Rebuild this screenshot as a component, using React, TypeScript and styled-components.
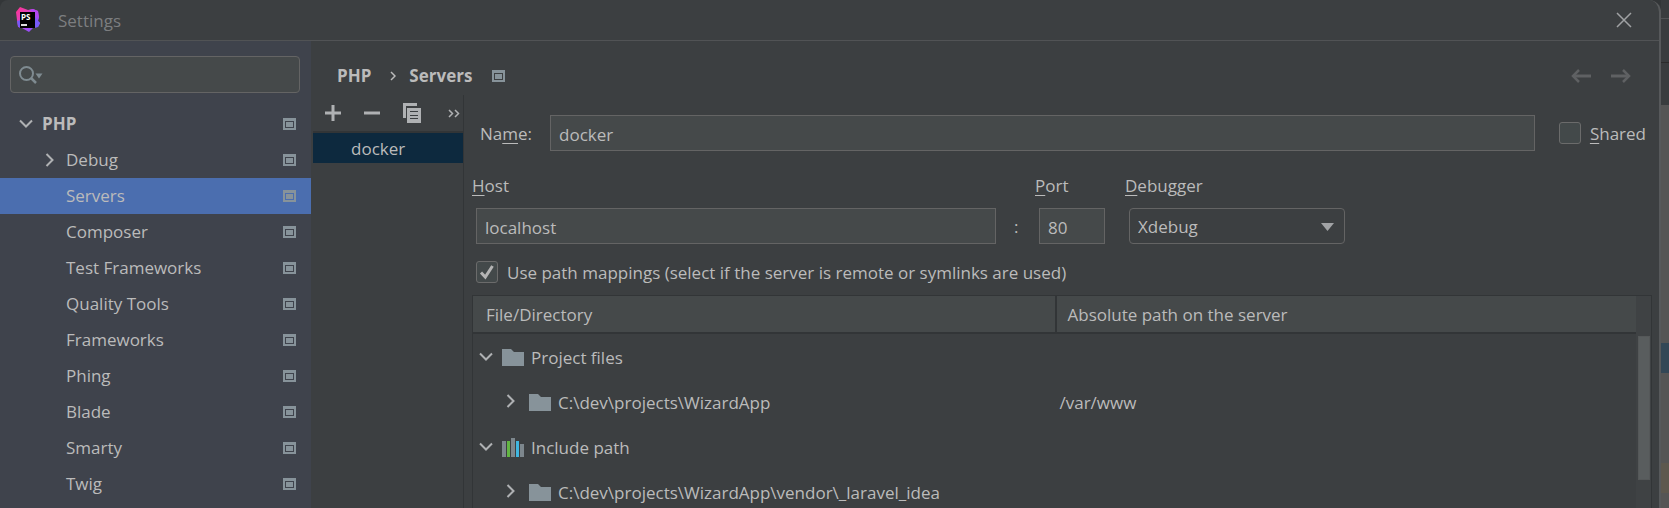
import React, { useState } from "react";
import styled, { createGlobalStyle, css } from "styled-components";

const c = {
  panel: "#3c3f41",
  side: "#3f434c",
  field: "#45494a",
  line: "#646464",
  dark: "#323537",
  text: "#bbbbbb",
  icon: "#87939a",
  glyph: "#afb1b3",
};

const Global = createGlobalStyle`
  *, *::before, *::after { box-sizing: border-box; }
  html, body, #root { height: 100%; }
  body { margin: 0; overflow: hidden; background: ${c.panel}; }
  body, button, input, select, table {
    font-family: "Open Sans", "Noto Sans", sans-serif;
    font-size: 17px;
    line-height: 24px;
    color: ${c.text};
  }
  u { text-underline-offset: 3px; text-decoration-thickness: 1px; }
`;

const Screen = styled.div`
  display: flex;
  height: 100%;
  overflow: hidden;
  background: #333638;
`;

const Dialog = styled.div`
  flex: 1;
  min-width: 0;
  display: flex;
  flex-direction: column;
  border-right: 2px solid #57595b;
  border-radius: 8px 12px 0 0;
  background: ${c.panel};
`;

const Backdrop = styled.div`
  width: 8px;
  display: flex;
  flex-direction: column;
`;

const Strip = styled.div<{ $h?: number; $color: string; $line?: string }>`
  ${(p) => (p.$h ? css`height: ${p.$h}px;` : css`flex: 1;`)}
  background: ${(p) => p.$color};
  border-bottom: ${(p) => (p.$line ? `1px solid ${p.$line}` : "none")};
`;

const TitleBar = styled.header`
  display: flex;
  align-items: center;
  flex: none;
  height: 41px;
  padding: 0 22px 0 15px;
  border-bottom: 1px solid #515355;
`;

const Title = styled.h1`
  flex: 1;
  margin: 0 0 0 17px;
  padding-top: 2px;
  font-size: 17px;
  font-weight: 400;
  color: #7c7e80;
`;

const IconButton = styled.button`
  display: inline-flex;
  align-items: center;
  justify-content: center;
  padding: 0;
  border: 0;
  background: none;
  color: ${c.glyph};
`;

const Body = styled.div`
  flex: 1;
  min-height: 0;
  display: flex;
`;

const Sidebar = styled.nav`
  flex: none;
  width: 311px;
  padding-top: 15px;
  overflow: hidden;
  background: ${c.side};
`;

const SearchBox = styled.label`
  display: flex;
  align-items: center;
  height: 37px;
  margin: 0 11px 13px 10px;
  padding-left: 8px;
  border: 1px solid ${c.line};
  border-radius: 4px;
  background: ${c.field};
`;

const SearchInput = styled.input`
  flex: 1;
  min-width: 0;
  border: 0;
  outline: 0;
  background: none;
`;

const Tree = styled.ul`
  margin: 0;
  padding: 0;
  list-style: none;
`;

const TreeRow = styled.li<{ $root?: boolean; $active?: boolean }>`
  display: flex;
  align-items: center;
  height: 36px;
  padding: 0 15px 1px ${(p) => (p.$root ? 16 : 40)}px;
  font-weight: ${(p) => (p.$root ? 700 : 400)};
  background: ${(p) => (p.$active ? "#4b6eaf" : "transparent")};
`;

const Toggle = styled.span`
  flex: none;
  display: flex;
  align-items: center;
  justify-content: center;
  width: 19px;
  margin-right: 7px;
`;

const TreeLabel = styled.a`
  flex: 1;
  color: inherit;
  text-decoration: none;
`;

const Main = styled.main`
  flex: 1;
  min-width: 0;
  display: flex;
  flex-direction: column;
  padding-left: 2px;
`;

const Crumbs = styled.div`
  flex: none;
  display: flex;
  align-items: center;
  height: 54px;
  padding: 16px 28px 0 24px;
  font-weight: 700;
`;

const CrumbSep = styled.span`
  display: flex;
  margin: 0 13px 0 19px;
`;

const CrumbName = styled.span`
  flex: 1;
  display: flex;
  align-items: center;
  gap: 20px;
`;

const NavButtons = styled.div`
  display: flex;
  gap: 20px;
`;

const Columns = styled.div`
  flex: 1;
  min-height: 0;
  display: flex;
`;

const ServerList = styled.section`
  flex: none;
  width: 151px;
  border-right: 1px solid ${c.dark};
`;

const Toolbar = styled.div`
  display: flex;
  align-items: center;
  height: 38px;
  gap: 23px;
  padding: 0 3px 0 12px;
  border-bottom: 2px solid ${c.dark};

  button:last-child {
    margin-left: auto;
  }
`;

const ServerItem = styled.div`
  height: 30px;
  padding: 4px 0 0 38px;
  background: #0d293e;
`;

const Form = styled.form`
  flex: 1;
  min-width: 0;
  display: flex;
  flex-direction: column;
  padding: 20px 7px 0 8px;
`;

const NameRow = styled.div`
  flex: none;
  display: flex;
  align-items: center;
  padding: 0 6px 0 8px;
`;

const NameLabel = styled.label`
  flex: none;
  width: 70px;
  padding-top: 2px;
`;

const TextField = styled.input`
  width: 100%;
  min-width: 0;
  height: 36px;
  padding: 2px 8px 0;
  border: 1px solid ${c.line};
  border-radius: 0;
  outline: 0;
  background: ${c.field};
`;

const CheckLabel = styled.label`
  flex: none;
  display: flex;
  align-items: center;
  gap: 9px;
`;

const CheckText = styled.span`
  padding-top: 2px;
`;

const SharedSlot = styled.div`
  margin-left: 24px;
`;

const Check = styled.input`
  appearance: none;
  flex: none;
  width: 22px;
  height: 22px;
  margin: 0;
  border: 1px solid #6b6b6b;
  border-radius: 3px;
  background: #43494a;
  &:checked {
    background: #43494a
      url("data:image/svg+xml,%3Csvg xmlns='http://www.w3.org/2000/svg' viewBox='0 0 20 20'%3E%3Cpath d='M4 10.5 8.3 15 15.5 4' fill='none' stroke='%23b4b4b4' stroke-width='3'/%3E%3C/svg%3E")
      center / 20px 20px no-repeat;
  }
`;

const HostGrid = styled.div`
  flex: none;
  display: grid;
  grid-template-columns: minmax(0, 563fr) 90px minmax(220px, 527fr);
  margin-top: 23px;
`;

const FieldLabel = styled.label`
  height: 34px;
`;

const HostCell = styled.div`
  display: flex;
  align-items: center;
  padding-left: 4px;
`;

const Colon = styled.span`
  flex: none;
  width: 39px;
  padding: 2px 0 0 18px;
`;

const PortCell = styled.div`
  padding: 0 20px 0 4px;
`;

const SelectWrap = styled.div`
  position: relative;
  width: 216px;
  margin-left: 4px;
`;

const Select = styled.select`
  appearance: none;
  width: 100%;
  height: 36px;
  padding: 2px 36px 0 8px;
  border: 1px solid ${c.line};
  border-radius: 4px;
  outline: 0;
  background: ${c.panel};
`;

const SelectArrow = styled.svg`
  position: absolute;
  top: 15px;
  right: 11px;
  pointer-events: none;
`;

const MappingRow = styled.div`
  flex: none;
  display: flex;
  align-items: center;
  height: 51px;
  padding: 4px 0 0 4px;
`;

const TableBox = styled.div`
  flex: 1;
  min-height: 0;
  display: flex;
  border: 1px solid ${c.dark};
  border-bottom: 0;
  overflow: hidden;
`;

const Table = styled.table`
  flex: 1;
  align-self: flex-start;
  table-layout: fixed;
  border-collapse: separate;
  border-spacing: 0;
`;

const Th = styled.th<{ $first?: boolean }>`
  width: ${(p) => (p.$first ? "50%" : "auto")};
  height: 38px;
  padding: 2px 0 0 ${(p) => (p.$first ? 13 : 11)}px;
  font-weight: 400;
  text-align: left;
  background: ${c.field};
  border-bottom: 2px solid ${c.dark};
  border-left: ${(p) => (p.$first ? "0" : `2px solid ${c.dark}`)};
`;

const Td = styled.td`
  height: 45px;
  padding: 2px 0 0 5px;
`;

const FileCell = styled.div<{ $depth: number }>`
  display: flex;
  align-items: center;
  padding-left: ${(p) => p.$depth * 27}px;
  white-space: nowrap;
`;

const FileIcon = styled.span`
  display: flex;
  margin-right: 7px;
`;

const FileToggle = styled.span`
  flex: none;
  display: flex;
  width: 16px;
  margin: 0 7px 3px 1px;
`;

const ScrollTrack = styled.div`
  flex: none;
  width: 15px;
  padding: 40px 1px 0 2px;
  background: #3f4244;
`;

const ScrollThumb = styled.div`
  height: 144px;
  border: 1px solid #555859;
  background: #595d5e;
`;

const ScopeIcon = () => (
  <svg width="13" height="12" viewBox="0 0 13 12" aria-hidden="true">
    <path fill={c.icon} fillRule="evenodd" d="M0 0h13v12H0zM2 3v7h9V3z" />
    <rect x="3" y="4" width="7" height="5" fill={c.icon} />
  </svg>
);

const Chevron = ({ open }: { open?: boolean }) =>
  open ? (
    <svg width="14" height="9" viewBox="0 0 14 9" fill="none" stroke={c.glyph} strokeWidth="2" aria-hidden="true">
      <path d="M1 1.5l6 6 6-6" />
    </svg>
  ) : (
    <svg width="9" height="14" viewBox="0 0 9 14" fill="none" stroke={c.glyph} strokeWidth="2" aria-hidden="true">
      <path d="M1.5 1l6 6-6 6" />
    </svg>
  );

const Folder = () => (
  <svg width="22" height="17" viewBox="0 0 22 17" aria-hidden="true">
    <path fill={c.icon} d="M0 0h9l3 3h10v14H0z" />
  </svg>
);

const Library = () => (
  <svg width="22" height="19" viewBox="0 0 22 19" aria-hidden="true">
    <path fill="#7d878d" d="M0 3h4v16H0zM9 0h4v19H9zM18 6h4v13h-4z" />
    <path fill="#62b543" d="M5 3h3v16H5z" />
    <path fill="#40b6e0" d="M14 3h3v16h-3z" />
  </svg>
);

const Logo = () => (
  <svg width="26" height="26" viewBox="0 0 26 26" aria-hidden="true">
    <defs>
      <linearGradient id="psA" x1="0" y1="0" x2="1" y2="1">
        <stop offset="0" stopColor="#ff318c" />
        <stop offset=".3" stopColor="#e63fb5" />
        <stop offset=".55" stopColor="#b345f1" />
        <stop offset="1" stopColor="#765af8" />
      </linearGradient>
    </defs>
    <path fill="url(#psA)" d="M1 5l4-5 8 3 5-1 5 2 1 7-1 3 2 2-2 4-5 1-4 4-7-4-4-1-1-7z" />
    <path fill="#b345f1" d="M14 3l4-1 5 2 1 7-4-5z" />
    <path fill="#765af8" d="M20 10l3 4 2 2-2 4-5 1H5l-2-2-1-5 4-1z" />
    <rect x="5" y="5" width="15" height="16" fill="#000" />
    <text x="6" y="13" fill="#fff" fontFamily="Open Sans, sans-serif" fontSize="8" fontWeight="700">PS</text>
    <rect x="6" y="17" width="6" height="2" fill="#ddd" />
  </svg>
);

const NavArrow = ({ back }: { back?: boolean }) => (
  <svg width="20" height="14" viewBox="0 0 20 14" fill="none" stroke="#5f6163" aria-hidden="true">
    <path strokeWidth="3" d={back ? "M2 7h18" : "M0 7h18"} />
    <path strokeWidth="2.500" d={back ? "M8 1L2 7l6 6" : "M12 1l6 6-6 6"} />
  </svg>
);

const pages = ["Debug", "Servers", "Composer", "Test Frameworks", "Quality Tools", "Frameworks", "Phing", "Blade", "Smarty", "Twig"];

const files = [
  { name: "Project files", depth: 0, open: true, icon: <Folder />, remote: "" },
  { name: "C:\\dev\\projects\\WizardApp", depth: 1, icon: <Folder />, remote: "/var/www" },
  { name: "Include path", depth: 0, open: true, icon: <Library />, remote: "" },
  { name: "C:\\dev\\projects\\WizardApp\\vendor\\_laravel_idea", depth: 1, icon: <Folder />, remote: "" },
];

export default function App() {
  const [shared, setShared] = useState(false);
  const [mapped, setMapped] = useState(true);
  return (
    <Screen>
      <Global />
      <Dialog role="dialog" aria-label="Settings">
        <TitleBar>
          <Logo />
          <Title>Settings</Title>
          <IconButton aria-label="Close">
            <svg width="26" height="16" viewBox="0 0 26 16" fill="none" stroke="#a0a2a4" strokeWidth="1.500">
              <path d="M6 1l14 14M20 1L6 15" />
            </svg>
          </IconButton>
        </TitleBar>
        <Body>
          <Sidebar aria-label="Settings pages">
            <SearchBox>
              <svg width="24" height="18" viewBox="0 0 24 18" fill="none" stroke="#7f8b91" strokeWidth="2" aria-hidden="true">
                <circle cx="7.500" cy="7.500" r="6.500" />
                <path strokeWidth="2.500" d="M12 12l5 5" />
                <path fill="#7f8b91" stroke="none" d="M16.500 7.500h7l-3.500 5z" />
              </svg>
              <SearchInput type="text" aria-label="Search settings" />
            </SearchBox>
            <Tree>
              <TreeRow $root>
                <Toggle><Chevron open /></Toggle>
                <TreeLabel href="#php">PHP</TreeLabel>
                <ScopeIcon />
              </TreeRow>
              {pages.map((name) => (
                <TreeRow key={name} $active={name === "Servers"}>
                  <Toggle>{name === "Debug" && <Chevron />}</Toggle>
                  <TreeLabel href={"#" + name}>{name}</TreeLabel>
                  <ScopeIcon />
                </TreeRow>
              ))}
            </Tree>
          </Sidebar>
          <Main>
            <Crumbs>
              PHP
              <CrumbSep>
                <svg width="6" height="10" viewBox="0 0 6 10" fill="none" stroke={c.text} strokeWidth="1.500" aria-hidden="true">
                  <path d="M1 1l4 4-4 4" />
                </svg>
              </CrumbSep>
              <CrumbName>Servers <ScopeIcon /></CrumbName>
              <NavButtons>
                <IconButton aria-label="Back"><NavArrow back /></IconButton>
                <IconButton aria-label="Forward"><NavArrow /></IconButton>
              </NavButtons>
            </Crumbs>
            <Columns>
              <ServerList aria-label="Servers">
                <Toolbar>
                  <IconButton aria-label="Add">
                    <svg width="16" height="16" viewBox="0 0 16 16" fill="none" stroke={c.glyph} strokeWidth="3"><path d="M8 0v16M0 8h16" /></svg>
                  </IconButton>
                  <IconButton aria-label="Remove">
                    <svg width="16" height="16" viewBox="0 0 16 16" fill="none" stroke={c.glyph} strokeWidth="3"><path d="M0 8h16" /></svg>
                  </IconButton>
                  <IconButton aria-label="Copy">
                    <svg width="18" height="20" viewBox="0 0 18 20" fill={c.glyph}>
                      <path d="M0 0h14v3H3v12H0z" />
                      <path fillRule="evenodd" d="M4 5h14v15H4zM7 8v1h8V8zM7 12v1h8v-1zM7 15v1h8v-1z" />
                    </svg>
                  </IconButton>
                  <IconButton aria-label="More">
                    <svg width="12" height="9" viewBox="0 0 12 9" fill="none" stroke={c.glyph} strokeWidth="1.500"><path d="M1 1l3.500 3.500L1 8M7 1l3.500 3.500L7 8" /></svg>
                  </IconButton>
                </Toolbar>
                <ServerItem>docker</ServerItem>
              </ServerList>
              <Form>
                <NameRow>
                  <NameLabel htmlFor="name">Na<u>m</u>e:</NameLabel>
                  <TextField id="name" defaultValue="docker" />
                  <SharedSlot>
                    <CheckLabel>
                      <Check type="checkbox" checked={shared} onChange={() => setShared(!shared)} />
                      <CheckText><u>S</u>hared</CheckText>
                    </CheckLabel>
                  </SharedSlot>
                </NameRow>
                <HostGrid>
                  <FieldLabel htmlFor="host"><u>H</u>ost</FieldLabel>
                  <FieldLabel htmlFor="port"><u>P</u>ort</FieldLabel>
                  <FieldLabel htmlFor="debugger"><u>D</u>ebugger</FieldLabel>
                  <HostCell>
                    <TextField id="host" defaultValue="localhost" />
                    <Colon>:</Colon>
                  </HostCell>
                  <PortCell><TextField id="port" defaultValue="80" /></PortCell>
                  <SelectWrap>
                    <Select id="debugger" defaultValue="Xdebug">
                      <option>Xdebug</option>
                      <option>Zend Debugger</option>
                    </Select>
                    <SelectArrow width="13" height="8" viewBox="0 0 13 8" aria-hidden="true">
                      <path fill="#a1a3a5" d="M0 0h13L6.500 8z" />
                    </SelectArrow>
                  </SelectWrap>
                </HostGrid>
                <MappingRow>
                  <CheckLabel>
                    <Check type="checkbox" checked={mapped} onChange={() => setMapped(!mapped)} />
                    <CheckText>Use path mappings (select if the server is remote or symlinks are used)</CheckText>
                  </CheckLabel>
                </MappingRow>
                <TableBox>
                  <Table>
                    <thead>
                      <tr>
                        <Th $first>File/Directory</Th>
                        <Th>Absolute path on the server</Th>
                      </tr>
                    </thead>
                    <tbody>
                      {files.map((f) => (
                        <tr key={f.name}>
                          <Td>
                            <FileCell $depth={f.depth}>
                              <FileToggle><Chevron open={f.open} /></FileToggle>
                              <FileIcon>{f.icon}</FileIcon>
                              {f.name}
                            </FileCell>
                          </Td>
                          <Td>{f.remote}</Td>
                        </tr>
                      ))}
                    </tbody>
                  </Table>
                  <ScrollTrack><ScrollThumb /></ScrollTrack>
                </TableBox>
              </Form>
            </Columns>
          </Main>
        </Body>
      </Dialog>
      <Backdrop aria-hidden="true">
        <Strip $h={19} $color="#393c3e" $line="#515355" />
        <Strip $h={44} $color="#393c3e" $line="#2b2b2b" />
        <Strip $h={42} $color="#393c3e" />
        <Strip $h={238} $color="#555555" />
        <Strip $h={30} $color="#334756" />
        <Strip $h={90} $color="#555555" />
        <Strip $h={30} $color="#5d584e" />
        <Strip $color="#555555" />
      </Backdrop>
    </Screen>
  );
}
